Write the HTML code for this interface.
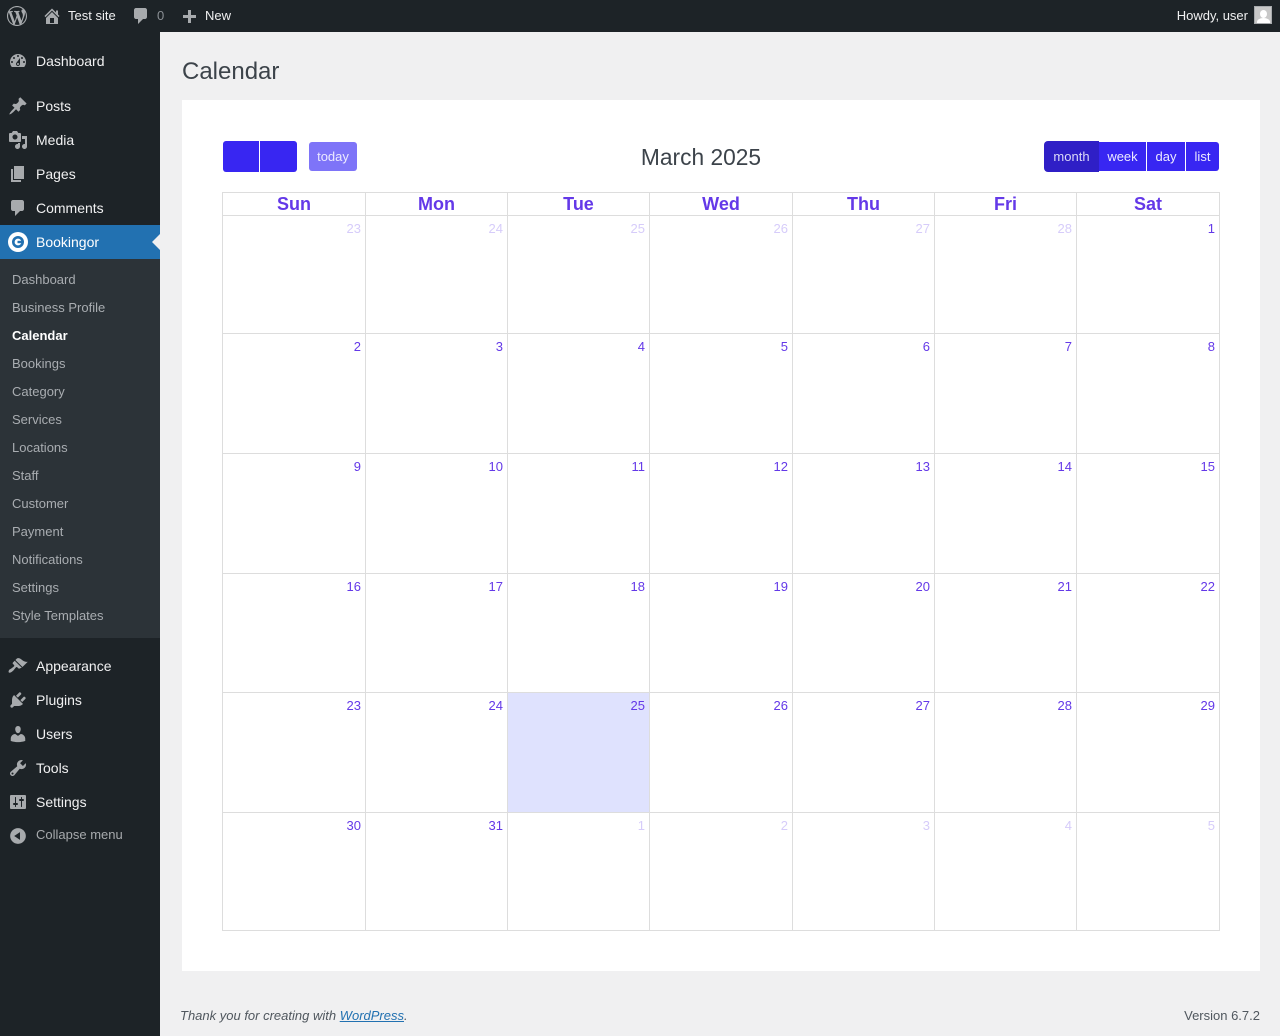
<!DOCTYPE html>
<html lang="en"><head><meta charset="utf-8"><title>Calendar</title>
<style>
*{box-sizing:border-box}
html,body{margin:0;padding:0}
body{width:1280px;height:1036px;position:relative;overflow:hidden;background:#f0f0f1;font-family:"Liberation Sans",sans-serif;color:#3c434a;font-size:13px}
.abs,.t,.ic{position:absolute}
.t{white-space:nowrap}
#bar{position:absolute;left:0;top:0;width:1280px;height:32px;background:#1d2327}
#bar .t{top:0;line-height:31px;font-size:13px;color:#f0f0f1}
#side{position:absolute;left:0;top:32px;width:160px;height:1004px;background:#1d2327}
.ic{width:20px;height:20px;left:7px;fill:#a7aaad}
.m{position:absolute;left:36px;font-size:14px;line-height:18px;color:#f0f0f1;white-space:nowrap}
.s{position:absolute;left:12px;font-size:13px;line-height:18px;color:#a9adb1;white-space:nowrap}
.btn{position:absolute;background:#3826f2;color:#eceaff;font-size:13px;line-height:29px;text-align:center;height:29px;top:142px}
#grid{position:absolute;left:222px;top:192px;width:998px;height:739px;display:grid;grid-template-columns:143px 142px 142px 143px 142px 142px 143px;grid-template-rows:23px 118px 120px 120px 119px 120px 118px;border-right:1px solid #ddd;border-bottom:1px solid #ddd}
#grid div{border-left:1px solid #ddd;border-top:1px solid #ddd;text-align:right;padding:5px 4px 0 0;font-size:13px;line-height:15px;color:#6439e8}
#grid div.h{text-align:center;padding:0;font-size:18px;font-weight:700;line-height:22px;color:#6439e8}
#grid div.o{color:#d6ccfa}
#grid div.td{background:#dfe2fe}
</style></head>
<body>
<div id="bar">
<svg class="ic" style="left:7px;top:6px;fill:#a7aaad" viewBox="0 0 20 20"><path d="M20 10c0-5.51-4.49-10-10-10C4.48 0 0 4.49 0 10c0 5.52 4.48 10 10 10 5.51 0 10-4.48 10-10zM7.78 15.37L4.37 6.22c.55-.02 1.17-.08 1.17-.08.5-.06.44-1.13-.06-1.11 0 0-1.45.11-2.37.11-.18 0-.37 0-.58-.01C4.12 2.69 6.87 1.11 10 1.11c2.33 0 4.45.87 6.05 2.34-.68-.11-1.65.39-1.65 1.58 0 .74.45 1.36.9 2.1.35.61.55 1.36.55 2.46 0 1.49-1.4 5-1.4 5l-3.03-8.37c.54-.02.82-.17.82-.17.5-.05.44-1.25-.06-1.22 0 0-1.44.12-2.38.12-.87 0-2.33-.12-2.33-.12-.5-.03-.56 1.2-.06 1.22l.92.08 1.26 3.41zM17.41 10c.24-.64.74-1.87.43-4.25.7 1.29 1.05 2.71 1.05 4.25 0 3.29-1.73 6.24-4.4 7.78.97-2.59 1.94-5.2 2.92-7.78zM6.1 18.09C3.12 16.65 1.11 13.53 1.11 10c0-1.3.23-2.48.72-3.59C3.25 10.3 4.67 14.2 6.1 18.09zm4.03-6.63l2.58 6.98c-.86.29-1.76.45-2.71.45-.79 0-1.57-.11-2.29-.33.81-2.38 1.62-4.74 2.42-7.1z"/></svg>
<svg class="ic" style="left:42px;top:6px" viewBox="0 0 20 20"><path d="M16 8.500l1.530 1.530-1.060 1.060L10 4.620l-6.470 6.470-1.060-1.060L10 2.500l4 4v-2h2v4zm-6-2.460l6 5.990V18H4v-5.970zM12 17v-5H8v5h4z"/></svg>
<span class="t" style="left:68px">Test site</span>
<svg class="ic" style="left:131px;top:6px" viewBox="0 0 20 20"><path d="M5 2h9c1.100 0 2 .9 2 2v7c0 1.100-.9 2-2 2h-2l-5 5v-5H5c-1.100 0-2-.9-2-2V4c0-1.100.9-2 2-2z"/></svg>
<span class="t" style="left:157px;color:#8a8f94">0</span>
<svg class="ic" style="left:179px;top:6px" viewBox="0 0 20 20"><path d="M17 9v3h-5v5H9v-5H4V9h5V4h3v5z"/></svg>
<span class="t" style="left:205px">New</span>
<span class="t" style="right:32px">Howdy, user</span>
<div class="abs" style="left:1254px;top:6px;width:18px;height:18px;background:#c8c8c8;border:1px solid #a7aaad;overflow:hidden"><div class="abs" style="left:5px;top:3px;width:7px;height:8px;border-radius:50%;background:#fff"></div><div class="abs" style="left:2px;top:11px;width:13px;height:8px;border-radius:50% 50% 0 0;background:#fff"></div></div>
</div>

<div id="side">
<svg class="ic" style="left:8px;top:19px" viewBox="0 0 20 20"><path d="M3.760 16h12.480c1.100-1.370 1.760-3.110 1.760-5 0-4.420-3.580-8-8-8s-8 3.580-8 8c0 1.890.66 3.630 1.760 5zM10 4c.55 0 1 .45 1 1s-.45 1-1 1-1-.45-1-1 .45-1 1-1zM6 6c.55 0 1 .45 1 1s-.45 1-1 1-1-.45-1-1 .45-1 1-1zm8 0c.55 0 1 .45 1 1s-.45 1-1 1-1-.45-1-1 .45-1 1-1zm-5.370 5.550L12 7v6c0 1.100-.9 2-2 2s-2-.9-2-2c0-.57.24-1.080.63-1.450zM4 10c.55 0 1 .45 1 1s-.45 1-1 1-1-.45-1-1 .45-1 1-1zm12 0c.55 0 1 .45 1 1s-.45 1-1 1-1-.45-1-1 .45-1 1-1zm-5 3c0-.55-.45-1-1-1s-1 .45-1 1 .45 1 1 1 1-.45 1-1z" fill-rule="evenodd"/></svg>
<span class="m" style="top:20px">Dashboard</span>
<svg class="ic" style="left:8px;top:64px" viewBox="0 0 20 20"><path d="M10.440 3.020l1.820-1.820 6.360 6.350-1.830 1.820c-1.050-.68-2.480-.57-3.410.36l-.75.75c-.92.93-1.040 2.350-.35 3.410l-1.830 1.820-2.410-2.410-2.800 2.790c-.42.420-3.380 2.710-3.800 2.290s1.860-3.390 2.280-3.810l2.790-2.790L4.100 9.360l1.830-1.820c1.050.69 2.480.57 3.400-.36l.75-.75c.93-.92 1.050-2.350.36-3.410z"/></svg>
<span class="m" style="top:65px">Posts</span>
<svg class="ic" style="left:8px;top:98px" viewBox="0 0 20 20"><path fill-rule="evenodd" d="M13 11V4c0-.55-.45-1-1-1h-1.670L9 1H5L3.670 3H2c-.55 0-1 .45-1 1v7c0 .55.45 1 1 1h10c.55 0 1-.45 1-1zM7 4.500c1.380 0 2.500 1.120 2.500 2.500S8.380 9.500 7 9.500 4.500 8.380 4.500 7 5.620 4.500 7 4.500zM14 6h5v10.500c0 1.380-1.120 2.500-2.500 2.500S14 17.880 14 16.500s1.120-2.500 2.500-2.500c.17 0 .34.02.5.05V9h-3V6zm-4 8.050V13h2v3.500c0 1.380-1.120 2.500-2.500 2.500S7 17.880 7 16.500 8.120 14 9.500 14c.17 0 .34.02.5.05z"/></svg>
<span class="m" style="top:99px">Media</span>
<svg class="ic" style="left:8px;top:132px" viewBox="0 0 20 20"><path d="M6 15V2h10v13H6zm-1 1h8v2H3V5h2v11z"/></svg>
<span class="m" style="top:133px">Pages</span>
<svg class="ic" style="left:8px;top:166px" viewBox="0 0 20 20"><path d="M5 2h9c1.100 0 2 .9 2 2v7c0 1.100-.9 2-2 2h-2l-5 5v-5H5c-1.100 0-2-.9-2-2V4c0-1.100.9-2 2-2z"/></svg>
<span class="m" style="top:167px">Comments</span>

<div class="abs" style="left:0;top:193px;width:160px;height:34px;background:#2271b1"></div>
<div class="abs" style="left:152px;top:202px;width:0;height:0;border-top:8px solid transparent;border-bottom:8px solid transparent;border-right:8px solid #f0f0f1"></div>
<svg class="abs" style="left:8px;top:200px;width:20px;height:20px" viewBox="0 0 20 20"><circle cx="10" cy="10" r="10" fill="#fff"/><circle cx="10" cy="10" r="4.700" fill="none" stroke="#2271b1" stroke-width="2.600"/><rect x="9.500" y="8.800" width="4" height="2.400" fill="#2271b1"/></svg>
<span class="m" style="top:201px;color:#fff">Bookingor</span>

<div class="abs" style="left:0;top:227px;width:160px;height:379px;background:#2c3338"></div>
<span class="s" style="top:239px">Dashboard</span>
<span class="s" style="top:267px">Business Profile</span>
<span class="s" style="top:295px;color:#fff;font-weight:700">Calendar</span>
<span class="s" style="top:323px">Bookings</span>
<span class="s" style="top:351px">Category</span>
<span class="s" style="top:379px">Services</span>
<span class="s" style="top:407px">Locations</span>
<span class="s" style="top:435px">Staff</span>
<span class="s" style="top:463px">Customer</span>
<span class="s" style="top:491px">Payment</span>
<span class="s" style="top:519px">Notifications</span>
<span class="s" style="top:547px">Settings</span>
<span class="s" style="top:575px">Style Templates</span>

<svg class="ic" style="left:8px;top:624px" viewBox="0 0 20 20"><path d="M14.480 11.060L7.410 3.990l1.500-1.500c.5-.56 2.300-.47 3.510.32 1.210.8 1.430 1.280 2.910 2.100 1.180.64 2.450 1.260 4.450.85zm-.71.71L6.700 4.700 4.930 6.470c-.39.39-.39 1.020 0 1.410l1.060 1.060c.39.39.39 1.030 0 1.420-.6.6-1.430 1.150-2.210 1.730-.35.26-.7.530-1.010.84C1.430 13.270 0 15.200.8 16.500c1.300.8 3.230-.63 4.570-1.960.31-.31.58-.66.84-1.010.58-.78 1.130-1.610 1.730-2.210.39-.39 1.030-.39 1.420 0l1.060 1.060c.39.39 1.020.39 1.410 0z"/></svg>
<span class="m" style="top:625px">Appearance</span>
<svg class="ic" style="left:8px;top:658px" viewBox="0 0 20 20"><path d="M13.110 4.360L9.870 7.600 8 5.730l3.240-3.240c.35-.34 1.050-.2 1.560.32.52.51.66 1.210.31 1.550zm-8 1.770l.91-1.120 9.010 9.010-1.190.84c-.71.71-2.630 1.160-3.820 1.160H6.140L4.900 17.260c-.59.59-1.540.59-2.120 0-.59-.58-.59-1.530 0-2.120l1.240-1.240v-3.880c0-1.130.4-3.190 1.090-3.890zm7.260 3.970l3.240-3.240c.34-.35 1.040-.21 1.550.31.52.51.66 1.210.31 1.550l-3.240 3.250z"/></svg>
<span class="m" style="top:659px">Plugins</span>
<svg class="ic" style="left:8px;top:692px" viewBox="0 0 20 20"><path d="M10 9.250c-2.270 0-2.730-3.440-2.730-3.440C7 4.020 7.820 2 9.970 2c2.160 0 2.980 2.020 2.710 3.810 0 0-.41 3.440-2.680 3.440zm0 2.570L12.720 10c2.390 0 4.520 2.330 4.520 4.530v2.490s-3.650 1.130-7.240 1.130c-3.650 0-7.240-1.130-7.240-1.130v-2.490c0-2.250 1.940-4.480 4.470-4.480z"/></svg>
<span class="m" style="top:693px">Users</span>
<svg class="ic" style="left:8px;top:726px" viewBox="0 0 20 20"><path d="M16.680 9.770c-1.340 1.340-3.300 1.670-4.950.99l-5.410 6.520c-.99.99-2.590.99-3.580 0s-.99-2.590 0-3.570l6.520-5.420c-.68-1.650-.35-3.610.99-4.950 1.280-1.280 3.120-1.620 4.720-1.060l-2.890 2.890 2.820 2.820 2.860-2.870c.53 1.580.18 3.390-1.080 4.650zM3.810 16.210c.4.39 1.040.39 1.430 0 .4-.4.4-1.040 0-1.430-.39-.4-1.030-.4-1.430 0-.39.39-.39 1.030 0 1.430z"/></svg>
<span class="m" style="top:727px">Tools</span>
<svg class="ic" style="left:8px;top:760px" viewBox="0 0 20 20"><path fill-rule="evenodd" d="M18 16V4c0-.55-.45-1-1-1H3c-.55 0-1 .45-1 1v12c0 .55.45 1 1 1h14c.55 0 1-.45 1-1zM8 11h1c.55 0 1 .45 1 1s-.45 1-1 1H8v1.500c0 .28-.22.5-.5.5s-.5-.22-.5-.5V13H6c-.55 0-1-.45-1-1s.45-1 1-1h1V5.500c0-.28.22-.5.5-.5s.5.22.5.5V11zm5-2h-1c-.55 0-1-.45-1-1s.45-1 1-1h1V5.500c0-.28.22-.5.5-.5s.5.22.5.5V7h1c.55 0 1 .45 1 1s-.45 1-1 1h-1v5.500c0 .28-.22.5-.5.5s-.5-.22-.5-.5V9z"/></svg>
<span class="m" style="top:761px">Settings</span>
<svg class="ic" style="left:8px;top:794px" viewBox="0 0 20 20"><path fill-rule="evenodd" d="M10 2.160c4.330 0 7.840 3.510 7.840 7.840s-3.510 7.840-7.840 7.840S2.160 14.330 2.160 10 5.710 2.160 10 2.160zm2 11.720V6.120L6.180 9.970z"/></svg>
<span class="m" style="top:794px;font-size:13px;color:#a7aaad">Collapse menu</span>
</div>

<div class="t" style="left:182px;top:57px;font-size:24px;line-height:30px;color:#3c434a">Calendar</div>
<div class="abs" style="left:182px;top:100px;width:1078px;height:871px;background:#fff"></div>

<div class="abs" style="left:223px;top:141px;width:36px;height:31px;background:#3826f2;border-radius:3px 0 0 3px"></div>
<div class="abs" style="left:260px;top:141px;width:37px;height:31px;background:#3826f2;border-radius:0 3px 3px 0"></div>
<div class="btn" style="left:309px;width:48px;background:#7e74f8;border-radius:3px">today</div>
<div class="t" style="left:501px;width:400px;top:142px;text-align:center;font-size:22.750px;line-height:30px;color:#3c434a">March 2025</div>
<div class="btn" style="left:1044px;width:55px;top:141px;height:31px;line-height:31px;background:#2f1fc6;border-radius:4px 0 0 4px;color:#dcdaf8">month</div>
<div class="btn" style="left:1099px;width:47px">week</div>
<div class="btn" style="left:1147px;width:38px">day</div>
<div class="btn" style="left:1186px;width:33px;border-radius:0 3px 3px 0">list</div>

<div id="grid">
<div class="h">Sun</div><div class="h">Mon</div><div class="h">Tue</div><div class="h">Wed</div><div class="h">Thu</div><div class="h">Fri</div><div class="h">Sat</div>
<div class="o">23</div><div class="o">24</div><div class="o">25</div><div class="o">26</div><div class="o">27</div><div class="o">28</div><div>1</div>
<div>2</div><div>3</div><div>4</div><div>5</div><div>6</div><div>7</div><div>8</div>
<div>9</div><div>10</div><div>11</div><div>12</div><div>13</div><div>14</div><div>15</div>
<div>16</div><div>17</div><div>18</div><div>19</div><div>20</div><div>21</div><div>22</div>
<div>23</div><div>24</div><div class="td">25</div><div>26</div><div>27</div><div>28</div><div>29</div>
<div>30</div><div>31</div><div class="o">1</div><div class="o">2</div><div class="o">3</div><div class="o">4</div><div class="o">5</div>
</div>

<div class="t" style="left:180px;top:1007px;line-height:17px;font-size:13px;font-style:italic;color:#50575e">Thank you for creating with <span style="color:#2271b1;text-decoration:underline">WordPress</span>.</div>
<div class="t" style="right:20px;top:1007px;line-height:17px;font-size:13px;color:#50575e">Version 6.7.2</div>
</body></html>
